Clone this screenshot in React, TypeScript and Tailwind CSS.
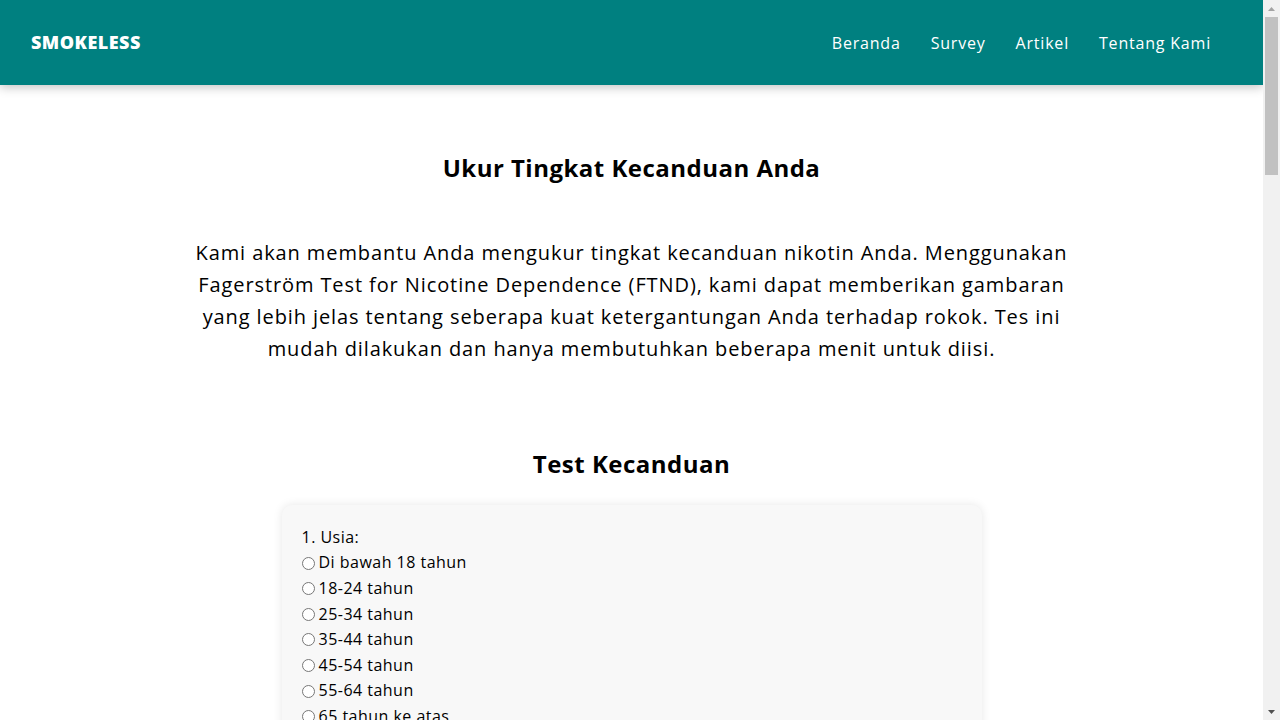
import { useState } from "react";

const questions = [
  {
    q: "1. Usia:",
    opts: [
      "Di bawah 18 tahun",
      "18-24 tahun",
      "25-34 tahun",
      "35-44 tahun",
      "45-54 tahun",
      "55-64 tahun",
      "65 tahun ke atas",
    ],
  },
  {
    q: "2. Jenis Kelamin:",
    opts: ["Laki-laki", "Perempuan"],
  },
  {
    q: "3. Seberapa cepat setelah bangun tidur Anda menghisap rokok pertama?",
    opts: ["Dalam 5 menit", "6-30 menit", "31-60 menit", "Setelah 60 menit"],
  },
  {
    q: "4. Apakah Anda merasa sulit untuk tidak merokok di tempat-tempat yang dilarang (misalnya di gereja, perpustakaan, bioskop)?",
    opts: ["Ya", "Tidak"],
  },
  {
    q: "5. Rokok mana yang paling sulit untuk Anda tinggalkan?",
    opts: ["Rokok pertama di pagi hari", "Rokok lainnya"],
  },
  {
    q: "6. Berapa batang rokok yang Anda hisap per hari?",
    opts: ["10 batang atau kurang", "11-20 batang", "21-30 batang", "31 batang atau lebih"],
  },
  {
    q: "7. Apakah Anda lebih sering merokok pada jam-jam pertama setelah bangun tidur dibandingkan waktu lainnya?",
    opts: ["Ya", "Tidak"],
  },
  {
    q: "8. Apakah Anda tetap merokok meskipun sedang sakit hingga harus berbaring di tempat tidur hampir sepanjang hari?",
    opts: ["Ya", "Tidak"],
  },
  {
    q: "9. Sudah berapa lama Anda merokok?",
    opts: ["Kurang dari 1 tahun", "1-5 tahun", "6-10 tahun", "Lebih dari 10 tahun"],
  },
  {
    q: "10. Apakah Anda pernah mencoba berhenti merokok?",
    opts: ["Belum pernah", "Pernah, 1 kali", "Pernah, 2-3 kali", "Pernah, lebih dari 3 kali"],
  },
];

// page scrollbar as it appears in the screenshot
function ScrollBar() {
  return (
    <aside className="w-[17px] shrink-0 bg-[#f1f1f1] flex flex-col">
      <div className="h-[17px] flex items-center justify-center">
        <svg width="7" height="4" viewBox="0 0 7 4">
          <path d="M3.5 0 L7 4 L0 4 Z" fill="#a3a3a3" />
        </svg>
      </div>
      <div className="mx-[2px] h-[158px] bg-[#c1c1c1]" />
      <div className="flex-1" />
      <div className="h-[17px] flex items-center justify-center">
        <svg width="7" height="4" viewBox="0 0 7 4">
          <path d="M0 0 L7 0 L3.5 4 Z" fill="#505050" />
        </svg>
      </div>
    </aside>
  );
}

export default function App() {
  const [answers, setAnswers] = useState<Record<number, string>>({});

  return (
    <div className="h-screen flex bg-white text-black leading-[1.6] tracking-[0.03em] font-['Open_Sans',sans-serif]">
      <div className="flex-1 overflow-y-auto [scrollbar-width:none]">
        <div className="min-h-[3126px] flex flex-col">
          <header className="h-[85px] shrink-0 bg-[#008080] flex items-center justify-between pl-[31px] pr-[52px] shadow-[0_2px_10px_rgba(0,0,0,0.25)]">
            <a className="text-white font-extrabold text-lg leading-[1.6]">SMOKELESS</a>
            <nav className="flex gap-[30px] text-white text-base tracking-[0.05em]">
              <a>Beranda</a>
              <a>Survey</a>
              <a>Artikel</a>
              <a>Tentang Kami</a>
            </nav>
          </header>

          <main className="flex-1 flex flex-col items-center">
            <section className="w-[900px] pt-[64px] text-center">
              <h1 className="text-2xl leading-[1.6] font-bold tracking-[0.02em]">
                Ukur Tingkat Kecanduan Anda
              </h1>
              <p className="mt-[50px] text-xl leading-[1.6] px-2 tracking-[0.045em]">
                Kami akan membantu Anda mengukur tingkat kecanduan nikotin Anda. Menggunakan
                Fagerström Test for Nicotine Dependence (FTND), kami dapat memberikan gambaran
                yang lebih jelas tentang seberapa kuat ketergantungan Anda terhadap rokok. Tes ini
                mudah dilakukan dan hanya membutuhkan beberapa menit untuk diisi.
              </p>
            </section>

            <section className="w-[700px] mt-[80px] mb-20">
              <h2 className="text-2xl leading-[1.6] font-bold text-center tracking-[0.02em]">
                Test Kecanduan
              </h2>
              <form className="mt-[21px] bg-[#f8f8f8] rounded-[10px] p-5 shadow-[0_0_10px_rgba(0,0,0,0.1)] flex flex-col gap-5">
                {questions.map((item, i) => (
                  <div key={i}>
                    <p>{item.q}</p>
                    {item.opts.map((o) => (
                      <label key={o} className="flex items-center">
                        <input
                          type="radio"
                          name={"q" + i}
                          className="m-0 mr-[4px]"
                          checked={answers[i] === o}
                          onChange={() => setAnswers({ ...answers, [i]: o })}
                        />
                        {o}
                      </label>
                    ))}
                  </div>
                ))}
                <button
                  type="button"
                  className="self-start bg-[#008080] text-white px-5 py-2 rounded-md"
                >
                  Kirim Jawaban
                </button>
              </form>
            </section>

            <section className="w-[900px] text-center mb-24">
              <h2 className="text-2xl leading-[1.6] font-bold">Hasil Tes</h2>
              <p className="mt-6 text-lg leading-[1.6]">
                Skor Anda akan ditampilkan di sini setelah Anda menyelesaikan seluruh pertanyaan.
              </p>
            </section>
          </main>

          <footer className="bg-[#008080] text-white text-center py-6">
            © 2024 Smokeless. All rights reserved.
          </footer>
        </div>
      </div>
      <ScrollBar />
    </div>
  );
}
